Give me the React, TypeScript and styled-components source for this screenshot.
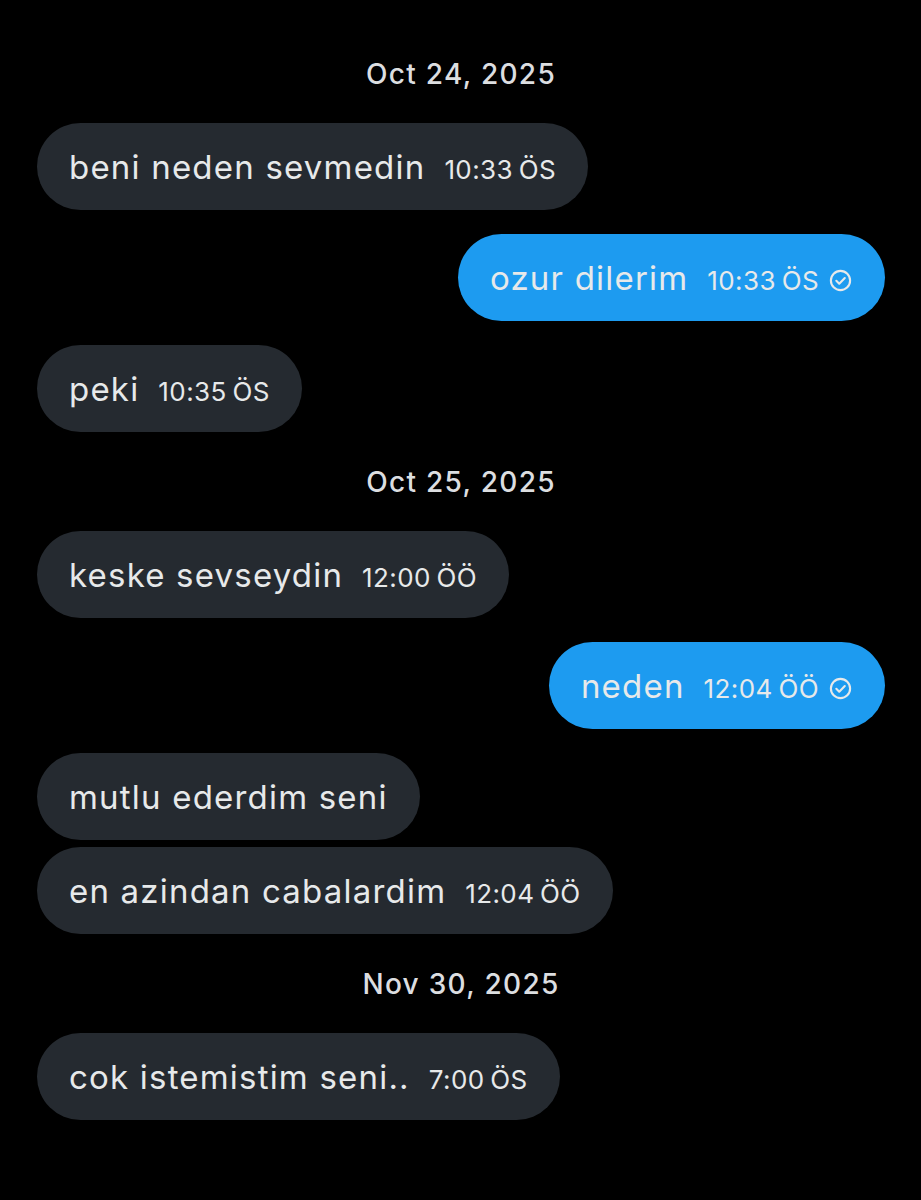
import styled, { createGlobalStyle } from "styled-components"

const GlobalStyle = createGlobalStyle`
  html, body {
    margin: 0;
    padding: 0;
    background: #000;
  }
  body {
    font-family: Inter, "Noto Sans", "Liberation Sans", sans-serif;
    -webkit-font-smoothing: antialiased;
  }
`

type Message = {
  text: string
  time: string
  mine?: boolean
  grouped?: boolean
}

type Day = {
  date: string
  messages: Message[]
}

const days: Day[] = [
  {
    date: "Oct 24, 2025",
    messages: [
      { text: "beni neden sevmedin", time: "10:33 ÖS" },
      { text: "ozur dilerim", time: "10:33 ÖS", mine: true },
      { text: "peki", time: "10:35 ÖS" },
    ],
  },
  {
    date: "Oct 25, 2025",
    messages: [
      { text: "keske sevseydin", time: "12:00 ÖÖ" },
      { text: "neden", time: "12:04 ÖÖ", mine: true },
      { text: "mutlu ederdim seni", time: "" },
      { text: "en azindan cabalardim", time: "12:04 ÖÖ", grouped: true },
    ],
  },
  {
    date: "Nov 30, 2025",
    messages: [{ text: "cok istemistim seni..", time: "7:00 ÖS" }],
  },
]

function SeenIcon() {
  return (
    <svg width="23" height="23" viewBox="0 0 22 22" fill="none">
      <circle cx="11" cy="11" r="9.2" stroke="currentColor" strokeWidth="2" />
      <path
        d="M7 11.3l2.8 2.8 5.3-5.4"
        stroke="currentColor"
        strokeWidth="2"
        strokeLinecap="round"
        strokeLinejoin="round"
      />
    </svg>
  )
}

function App() {
  return (
    <Page>
      <GlobalStyle />
      {days.map((day) => (
        <Section key={day.date}>
          <DateLabel>{day.date}</DateLabel>
          {day.messages.map((m, i) => (
            <Row
              key={i}
              $mine={!!m.mine}
              $gap={i === 0 ? 0 : m.grouped ? 7 : 24}
            >
              <Bubble $mine={!!m.mine}>
                <Text>{m.text}</Text>
                {m.time && <Time>{m.time}</Time>}
                {m.mine && (
                  <Check>
                    <SeenIcon />
                  </Check>
                )}
              </Bubble>
            </Row>
          ))}
        </Section>
      ))}
    </Page>
  )
}

const Page = styled.div`
  background: #000;
  min-height: 1200px;
  padding: 24px 36px 0 37px;
  box-sizing: border-box;
  display: flex;
  flex-direction: column;
`

const Section = styled.div`
  display: flex;
  flex-direction: column;
`

const DateLabel = styled.div`
  height: 99px;
  display: flex;
  align-items: center;
  justify-content: center;
  color: #dcdee0;
  font-size: 28px;
  font-weight: 500;
  letter-spacing: 1.3px;
`

const Row = styled.div<{ $mine: boolean; $gap: number }>`
  display: flex;
  justify-content: ${(p) => (p.$mine ? "flex-end" : "flex-start")};
  margin-top: ${(p) => p.$gap}px;
`

const Bubble = styled.div<{ $mine: boolean }>`
  display: flex;
  align-items: center;
  height: 87px;
  box-sizing: border-box;
  padding: 0 ${(p) => (p.$mine ? "33px" : "32px")} 0 32px;
  border-radius: 44px;
  background: ${(p) => (p.$mine ? "#1d9bf0" : "#252a30")};
  color: #e7e9ea;
`

const Text = styled.span`
  font-size: 33px;
  font-weight: 400;
  letter-spacing: 1.2px;
`

const Time = styled.span`
  font-size: 26px;
  margin-left: 19px;
  letter-spacing: 0.4px;
  padding-top: 5px;
  word-spacing: -2px;
`

const Check = styled.span`
  display: flex;
  margin-left: 10px;
  padding-top: 5px;
`

export default App
